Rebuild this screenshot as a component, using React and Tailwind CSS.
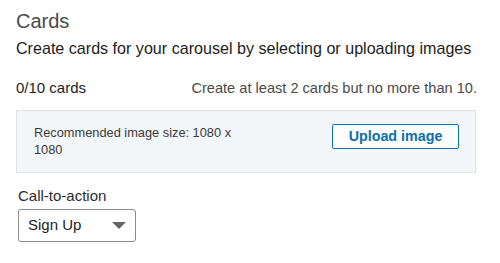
import React from 'react';

const App = () => {
  return (
    <div className="w-[500px] h-[263px] bg-white px-4 pt-[9px] font-['Liberation_Sans',Arial,sans-serif] overflow-hidden">
      <h2 className="text-[20px] leading-[24px] text-[#4a4a4a]">Cards</h2>
      <p className="mt-[5px] text-[16.1px] leading-[20px] text-[#1d1d1d]">
        Create cards for your carousel by selecting or uploading images
      </p>

      <div className="mt-5 flex items-center justify-between pr-[7px]">
        <span className="text-[15px] leading-[20px] text-[#1d1d1d]">0/10 cards</span>
        <span className="text-[14.6px] leading-[20px] text-[#4a4a4a]">
          Create at least 2 cards but no more than 10.
        </span>
      </div>

      <div className="mt-3 mr-[8px] flex items-start justify-between border border-[#dfe1e3] bg-[#f3f6f8] pl-[17px] pr-[16px] pt-[13px] pb-[14px]">
        <p className="w-[205px] text-[12.8px] leading-[17px] text-[#3a3a3a]">
          Recommended image size: 1080 x 1080
        </p>
        <button className="h-[25px] w-[127px] rounded-[2px] border border-[#0a74b5] bg-white text-[14.3px] font-bold leading-none text-[#0a6fae]">
          Upload image
        </button>
      </div>

      <div className="mt-[13px] pl-[2px]">
        <label className="block text-[15px] leading-[20px] text-[#2b2b2b]">Call-to-action</label>
        <div className="mt-[3px] flex h-[33px] w-[118px] items-center justify-between rounded-[3px] border border-[#8c8c8c] bg-white pl-[9px] pr-[9px]">
          <span className="text-[15px] text-[#1d1d1d]">Sign Up</span>
          <svg width="14" height="7" viewBox="0 0 14 7">
            <path d="M0 0 L14 0 L7 7 Z" fill="#666666" />
          </svg>
        </div>
      </div>
    </div>
  );
};

export default App;
